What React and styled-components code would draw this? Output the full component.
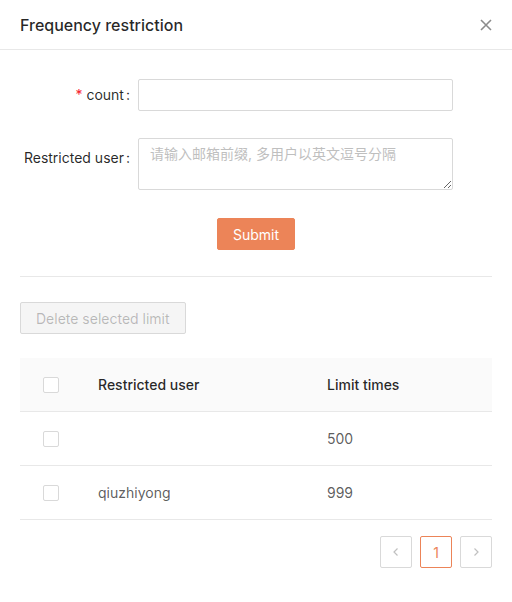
import React from 'react';
import styled, { createGlobalStyle } from 'styled-components';

const Global = createGlobalStyle`
  body {
    margin: 0;
    background: #fff;
    font-family: Inter, "Noto Sans", "Noto Sans CJK SC", sans-serif;
    font-size: 14px;
    color: rgba(0, 0, 0, 0.65);
  }
`;

const Modal = styled.div`
  width: 512px;
  height: 602px;
  background: #fff;
`;

const Header = styled.div`
  display: flex;
  align-items: center;
  justify-content: space-between;
  height: 50px;
  padding: 0 18px 0 20px;
  border-bottom: 1px solid #e8e8e8;
  box-sizing: border-box;
`;

const Title = styled.div`
  font-size: 16px;
  font-weight: 500;
  color: rgba(0, 0, 0, 0.85);
`;

const Close = styled.button`
  border: 0;
  background: none;
  padding: 0;
  width: 16px;
  height: 16px;
  display: flex;
  align-items: center;
  justify-content: center;
  color: rgba(0, 0, 0, 0.45);
  cursor: pointer;
`;

const Body = styled.div`
  padding: 25px 20px 0;
`;

const FormItem = styled.div`
  display: flex;
  align-items: flex-start;
  margin-bottom: ${p => p.$mb}px;
`;

const Label = styled.label`
  width: 118px;
  height: 40px;
  flex: none;
  text-align: right;
  line-height: 40px;
  color: rgba(0, 0, 0, 0.85);
  white-space: nowrap;
  &::after {
    content: ':';
    margin: 0 8px 0 2px;
  }
`;

const Req = styled.span`
  color: #f5222d;
  margin-right: 4px;
`;

const Control = styled.div`
  width: 315px;
  padding-top: ${p => p.$pt}px;
`;

const Input = styled.input`
  display: block;
  width: 100%;
  height: 32px;
  box-sizing: border-box;
  border: 1px solid #d9d9d9;
  border-radius: 2px;
  padding: 4px 11px;
  font: inherit;
  outline: none;
`;

const TextArea = styled.textarea`
  display: block;
  width: 100%;
  height: 52px;
  box-sizing: border-box;
  border: 1px solid #d9d9d9;
  border-radius: 2px;
  padding: 4px 11px;
  font: inherit;
  line-height: 1.5;
  outline: none;
  &::placeholder {
    color: #bfbfbf;
  }
`;

const Center = styled.div`
  display: flex;
  justify-content: center;
`;

const Primary = styled.button`
  height: 32px;
  padding: 0 15px;
  background: #ec8458;
  border: 1px solid #ec8458;
  border-radius: 2px;
  color: #fff;
  font: inherit;
  cursor: pointer;
`;

const Divider = styled.div`
  height: 1px;
  background: #e8e8e8;
  margin: 26px 0 25px;
`;

const Disabled = styled.button`
  display: block;
  height: 32px;
  padding: 0 15px;
  background: #f5f5f5;
  border: 1px solid #d9d9d9;
  border-radius: 2px;
  color: rgba(0, 0, 0, 0.25);
  font: inherit;
  cursor: not-allowed;
`;

const Table = styled.div`
  margin-top: 24px;
`;

const Row = styled.div`
  display: grid;
  grid-template-columns: 62px 229px 1fr;
  height: 54px;
  align-items: center;
  border-bottom: 1px solid #e8e8e8;
  background: ${p => (p.$head ? '#fafafa' : '#fff')};
  color: ${p => (p.$head ? 'rgba(0,0,0,0.85)' : 'rgba(0,0,0,0.65)')};
  font-weight: ${p => (p.$head ? 500 : 400)};
  box-sizing: border-box;
`;

const Cell = styled.div`
  padding: 0 16px;
`;

const CheckCell = styled.div`
  display: flex;
  justify-content: center;
`;

const Check = styled.span`
  width: 16px;
  height: 16px;
  box-sizing: border-box;
  border: 1px solid #d9d9d9;
  border-radius: 2px;
  background: #fff;
`;

const Pager = styled.div`
  display: flex;
  justify-content: flex-end;
  gap: 8px;
  margin-top: 16px;
`;

const PageBtn = styled.div`
  width: 32px;
  height: 32px;
  box-sizing: border-box;
  display: flex;
  align-items: center;
  justify-content: center;
  border: 1px solid ${p => (p.$active ? '#ec8458' : '#d9d9d9')};
  border-radius: 2px;
  color: ${p => (p.$active ? '#ec8458' : 'rgba(0,0,0,0.25)')};
`;

const Chevron = ({ dir }) => (
  <svg width="12" height="12" viewBox="0 0 12 12" fill="none" stroke="currentColor" strokeWidth="1.2">
    {dir === 'left' ? <path d="M7.5 2.5 4 6l3.5 3.5" /> : <path d="M4.5 2.5 8 6 4.5 9.5" />}
  </svg>
);

const rows = [
  { user: '', times: 500 },
  { user: 'qiuzhiyong', times: 999 },
];

export default function App() {
  return (
    <Modal>
      <Global />
      <Header>
        <Title>Frequency restriction</Title>
        <Close aria-label="close">
          <svg width="12" height="12" viewBox="0 0 12 12" stroke="currentColor" strokeWidth="1.6">
            <path d="M1 1l10 10M11 1 1 11" />
          </svg>
        </Close>
      </Header>
      <Body>
        <FormItem $mb={23}>
          <Label><Req>*</Req>count</Label>
          <Control $pt={4}><Input /></Control>
        </FormItem>
        <FormItem $mb={28}>
          <Label>Restricted user</Label>
          <Control $pt={0}>
            <TextArea placeholder="请输入邮箱前缀, 多用户以英文逗号分隔" />
          </Control>
        </FormItem>
        <Center>
          <Primary>Submit</Primary>
        </Center>
        <Divider />
        <Disabled>Delete selected limit</Disabled>
        <Table>
          <Row $head>
            <CheckCell><Check /></CheckCell>
            <Cell>Restricted user</Cell>
            <Cell>Limit times</Cell>
          </Row>
          {rows.map((r, i) => (
            <Row key={i}>
              <CheckCell><Check /></CheckCell>
              <Cell>{r.user}</Cell>
              <Cell>{r.times}</Cell>
            </Row>
          ))}
        </Table>
        <Pager>
          <PageBtn><Chevron dir="left" /></PageBtn>
          <PageBtn $active>1</PageBtn>
          <PageBtn><Chevron dir="right" /></PageBtn>
        </Pager>
      </Body>
    </Modal>
  );
}
